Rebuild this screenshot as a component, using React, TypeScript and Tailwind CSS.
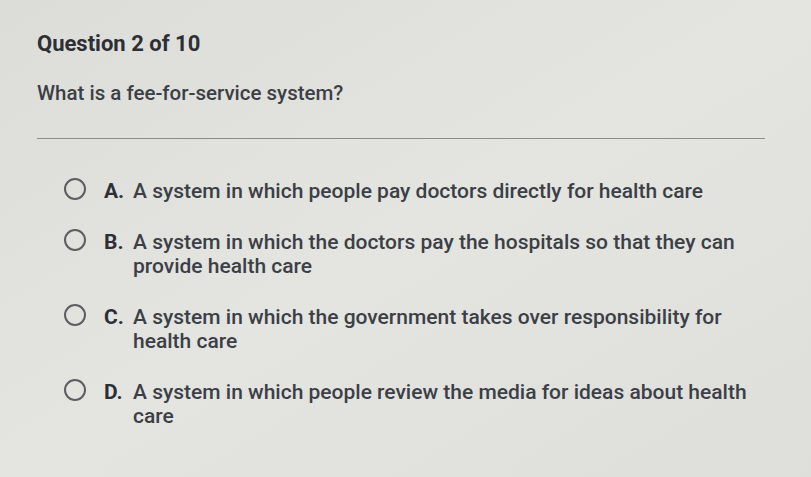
const options = [
  { letter: "A.", text: "A system in which people pay doctors directly for health care" },
  { letter: "B.", text: "A system in which the doctors pay the hospitals so that they can provide health care" },
  { letter: "C.", text: "A system in which the government takes over responsibility for health care" },
  { letter: "D.", text: "A system in which people review the media for ideas about health care" },
];

export default function App() {
  return (
    <div
      className="h-[477px] w-[811px] overflow-hidden bg-linear-to-br from-[#dcddd9] via-[#e4e5e1] to-[#dedfdb] pl-[37px] pt-[31px] text-[#3c3f46]"
      style={{ fontFamily: "Roboto, 'Liberation Sans', sans-serif" }}
    >
      <h1 className="text-[22px] leading-[26px] font-bold text-[#2d2f35]">Question 2 of 10</h1>
      <p className="mt-[24px] text-[20.5px] leading-[24px] font-medium">What is a fee-for-service system?</p>
      <div className="mt-[33px] h-px w-[728px] bg-[#8a8c8f]" />

      <div className="mt-[40px] flex flex-col gap-[27px] pl-[27px]">
        {options.map((o) => (
          <div key={o.letter} className="flex items-start">
            <span className="mt-[-1px] h-[22px] w-[22px] shrink-0 rounded-full border-2 border-[#5c5e62]" />
            <span className="ml-[18px] w-[29px] shrink-0 text-[21px] leading-[24px] font-bold text-[#2d2f35]">
              {o.letter}
            </span>
            <span className="w-[632px] text-[21px] leading-[24px] font-medium">{o.text}</span>
          </div>
        ))}
      </div>
    </div>
  );
}
